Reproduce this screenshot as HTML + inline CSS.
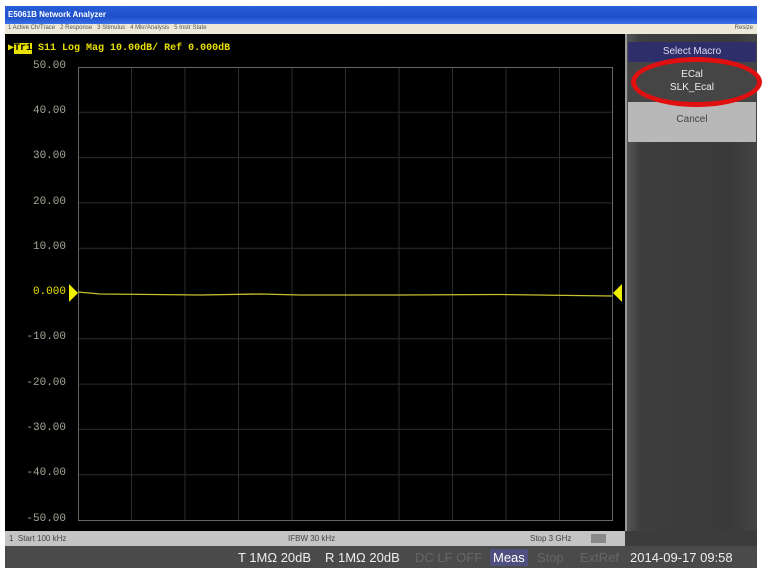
<!DOCTYPE html>
<html><head><style>
body{margin:0;width:769px;height:577px;background:#fff;position:relative;overflow:hidden;font-family:"Liberation Sans",sans-serif}
div{position:absolute;box-sizing:border-box}
.lbl{color:#a8a898;font:11px "Liberation Mono",monospace;text-align:right;width:62px;left:4px}
.b{position:absolute;top:4px}
</style></head><body>
<div style="left:5px;top:6px;width:752px;height:18px;background:linear-gradient(#2a5fd8,#1d4fc9 60%,#3a70e8);color:#fff;font-size:8px;font-weight:bold;padding:4px 3px">E5061B Network Analyzer</div>
<div style="left:5px;top:24px;width:752px;height:10px;background:#ece9d8;color:#555;font-size:6px;padding:1px 3px;white-space:pre">1 Active Ch/Trace   2 Response   3 Stimulus   4 Mkr/Analysis   5 Instr State<span style="position:absolute;right:4px">Resize</span></div>
<div style="left:5px;top:34px;width:620px;height:497px;background:#000"></div>
<div style="left:8px;top:42px;color:#e8e000;font:bold 10px 'Liberation Mono',monospace;white-space:pre">▶<span style="background:#e8e000;color:#000">Tr1</span> S11 Log Mag 10.00dB/ Ref 0.000dB</div>
<svg style="position:absolute;left:0;top:0" width="769" height="577">
<g stroke="#2c2c2c" stroke-width="1">
<line x1="131.5" y1="67" x2="131.5" y2="520"/><line x1="185" y1="67" x2="185" y2="520"/><line x1="238.5" y1="67" x2="238.5" y2="520"/><line x1="292" y1="67" x2="292" y2="520"/><line x1="345.5" y1="67" x2="345.5" y2="520"/><line x1="399" y1="67" x2="399" y2="520"/><line x1="452.5" y1="67" x2="452.5" y2="520"/><line x1="506" y1="67" x2="506" y2="520"/><line x1="559.5" y1="67" x2="559.5" y2="520"/>
<line x1="78" y1="112.3" x2="612" y2="112.3"/><line x1="78" y1="157.6" x2="612" y2="157.6"/><line x1="78" y1="202.9" x2="612" y2="202.9"/><line x1="78" y1="248.2" x2="612" y2="248.2"/><line x1="78" y1="338.8" x2="612" y2="338.8"/><line x1="78" y1="384.1" x2="612" y2="384.1"/><line x1="78" y1="429.4" x2="612" y2="429.4"/><line x1="78" y1="474.7" x2="612" y2="474.7"/>
</g>
<rect x="78.5" y="67.5" width="534" height="453" fill="none" stroke="#666"/>
<polyline points="78,292 100,294 200,295 260,294 300,295 400,295 500,294.5 612,296" fill="none" stroke="#c8c030" stroke-width="1.3"/>
<polygon points="69,284 69,302 78,293" fill="#f0f000"/>
<polygon points="622,284 622,302 613,293" fill="#f0f000"/>
</svg>
<div class="lbl" style="top:60px">50.00</div>
<div class="lbl" style="top:105px">40.00</div>
<div class="lbl" style="top:150px">30.00</div>
<div class="lbl" style="top:196px">20.00</div>
<div class="lbl" style="top:241px">10.00</div>
<div class="lbl" style="top:286px;color:#e8e000">0.000</div>
<div class="lbl" style="top:331px">-10.00</div>
<div class="lbl" style="top:377px">-20.00</div>
<div class="lbl" style="top:422px">-30.00</div>
<div class="lbl" style="top:467px">-40.00</div>
<div class="lbl" style="top:513px">-50.00</div>
<div style="left:625px;top:34px;width:132px;height:497px;background:linear-gradient(90deg,#555,#3e3e3e 10%,#3a3a3a 80%,#444);border-left:2px solid #999"></div>
<div style="left:628px;top:42px;width:128px;height:20px;background:#2e2e6a;color:#dde;font-size:10px;text-align:center;padding-top:4px">Select Macro</div>
<div style="left:628px;top:62px;width:128px;height:40px;background:#454545;color:#eee;font-size:10px;text-align:center;padding-top:6px;line-height:13px">ECal<br>SLK_Ecal</div>
<div style="left:628px;top:102px;width:128px;height:40px;background:#b8b8b8;color:#444;font-size:10px;text-align:center;padding-top:12px">Cancel</div>
<div style="left:631px;top:57px;width:131px;height:50px;border:5px solid #e01010;border-radius:50%"></div>
<div style="left:5px;top:531px;width:620px;height:15px;background:#c4c4c4;color:#444;font-size:8px;padding:3px 4px;white-space:pre">1  Start 100 kHz<span style="position:absolute;left:283px;top:3px">IFBW 30 kHz</span><span style="position:absolute;left:525px;top:3px">Stop 3 GHz</span><span style="position:absolute;left:586px;top:3px;width:15px;height:9px;background:#888"></span></div>
<div style="left:625px;top:531px;width:132px;height:15px;background:#3c3c3c"></div>
<div style="left:5px;top:546px;width:752px;height:22px;background:#4a4a4a;font-size:13px;color:#eee;white-space:nowrap"><span class="b" style="left:233px">T 1MΩ 20dB</span><span class="b" style="left:320px">R 1MΩ 20dB</span><span class="b" style="left:410px;color:#666">DC LF OFF</span><span class="b" style="left:485px;top:3px;background:#505080;color:#fff;padding:1px 3px">Meas</span><span class="b" style="left:532px;color:#666">Stop</span><span class="b" style="left:575px;color:#666">ExtRef</span><span class="b" style="left:625px">2014-09-17 09:58</span></div>
</body></html>
